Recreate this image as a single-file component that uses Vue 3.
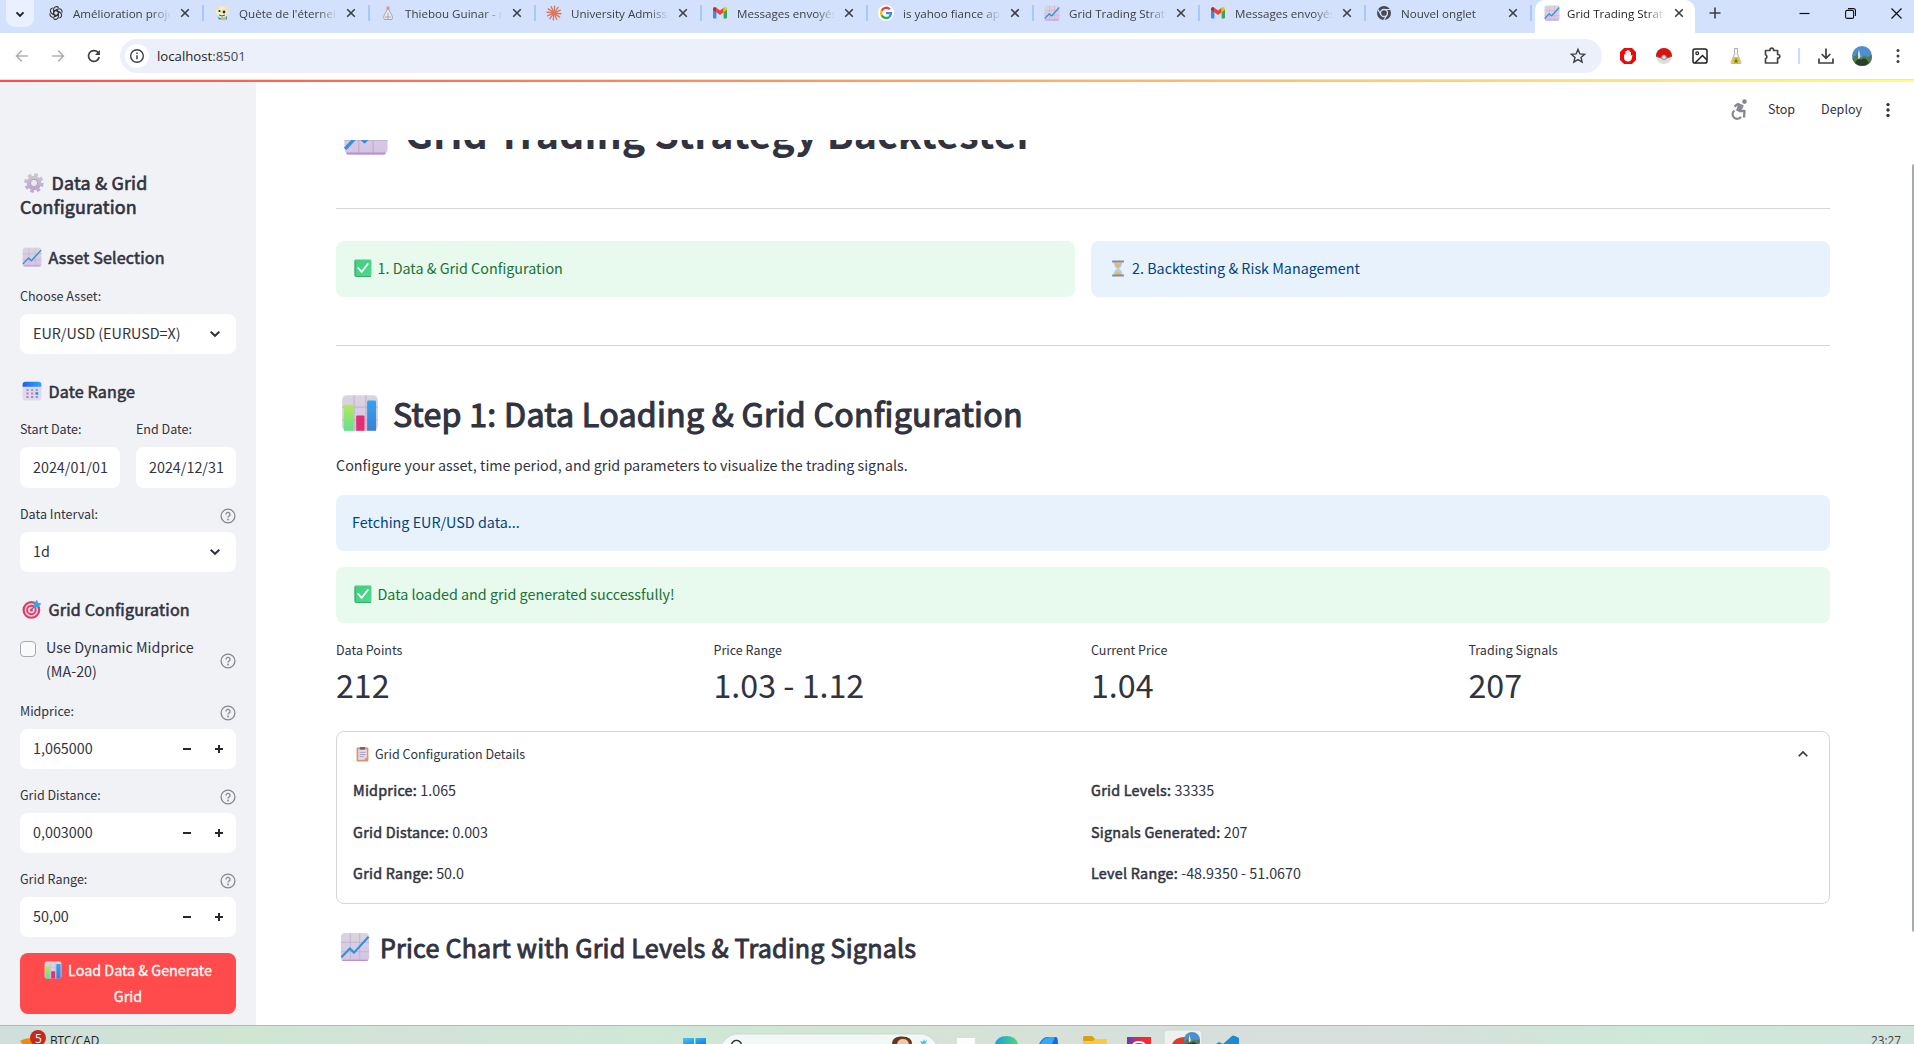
<script setup>
const tabs = [
  { icon: 'openai', title: 'Amélioration proje' },
  { icon: 'bee', title: "Quète de l'éternel" },
  { icon: 'guinar', title: 'Thiebou Guinar - r' },
  { icon: 'claude', title: 'University Admissi' },
  { icon: 'gmail', title: 'Messages envoyés' },
  { icon: 'google', title: 'is yahoo fiance ap' },
  { icon: 'chart', title: 'Grid Trading Strate' },
  { icon: 'gmail', title: 'Messages envoyés' },
  { icon: 'chrome', title: 'Nouvel onglet' },
  { icon: 'chart', title: 'Grid Trading Strate', active: true },
]
const extensions = ['hand', 'ball', 'picture', 'flask', 'puzzle']
const numbers = [
  { label: 'Midprice:', value: '1,065000' },
  { label: 'Grid Distance:', value: '0,003000' },
  { label: 'Grid Range:', value: '50,00' },
]
const metrics = [
  { label: 'Data Points', value: '212' },
  { label: 'Price Range', value: '1.03 - 1.12' },
  { label: 'Current Price', value: '1.04' },
  { label: 'Trading Signals', value: '207' },
]
const details = [
  [
    { k: 'Midprice:', v: '1.065' },
    { k: 'Grid Distance:', v: '0.003' },
    { k: 'Grid Range:', v: '50.0' },
  ],
  [
    { k: 'Grid Levels:', v: '33335' },
    { k: 'Signals Generated:', v: '207' },
    { k: 'Level Range:', v: '-48.9350 - 51.0670' },
  ],
]
</script>

<template>
  <div class="screen">
    <svg class="defs" width="0" height="0">
      <defs>
        <linearGradient id="gPaper" x1="0" y1="0" x2="0" y2="1"><stop offset="0" stop-color="#d9d5dd" /><stop offset="1" stop-color="#d6c3e6" /></linearGradient>
        <linearGradient id="gGreen" x1="0" y1="0" x2="0" y2="1"><stop offset="0" stop-color="#b5e85a" /><stop offset="1" stop-color="#5fe28c" /></linearGradient>
        <linearGradient id="gBlue" x1="0" y1="0" x2="0" y2="1"><stop offset="0" stop-color="#2fa4f5" /><stop offset="1" stop-color="#3f7fd0" /></linearGradient>
        <linearGradient id="gGear" x1="0" y1="0" x2="0" y2="1"><stop offset="0" stop-color="#c9c4cf" /><stop offset="1" stop-color="#bfa6d6" /></linearGradient>
        <linearGradient id="gCal" x1="0" y1="0" x2="1" y2="0"><stop offset="0" stop-color="#1f62e0" /><stop offset="1" stop-color="#33a4ff" /></linearGradient>
        <linearGradient id="gCheck" x1="0" y1="0" x2="1" y2="1"><stop offset="0" stop-color="#3fce7f" /><stop offset="1" stop-color="#4fd98d" /></linearGradient>
        <linearGradient id="gEdge" x1="0" y1="0" x2="1" y2="0"><stop offset="0" stop-color="#1b9de2" /><stop offset="1" stop-color="#4fd67c" /></linearGradient>
        <linearGradient id="gApp" x1="0" y1="0" x2="1" y2="0"><stop offset="0" stop-color="#5b3fc0" /><stop offset=".6" stop-color="#f0283c" /><stop offset="1" stop-color="#ff2a2a" /></linearGradient>
        <linearGradient id="gWin" x1="0" y1="0" x2="1" y2="1"><stop offset="0" stop-color="#4cc4f7" /><stop offset="1" stop-color="#0a84dc" /></linearGradient>
      </defs>
      <symbol id="chart" viewBox="0 0 32 32">
        <rect x="1" y="1" width="30" height="30" rx="4" fill="url(#gPaper)" />
        <path d="M11 1v30M21 1v30M1 11h30M1 21h30" stroke="#bdb0c7" stroke-width=".8" />
        <path d="M3 30.200h26" stroke="#b592cc" stroke-width="1.400" stroke-linecap="round" />
        <path d="M1.500 27 10.500 17.500 15 22 30.500 5" fill="none" stroke="#3490d8" stroke-width="2.300" stroke-linejoin="round" />
      </symbol>
      <symbol id="bars" viewBox="0 0 32 32">
        <rect x="1" y="1" width="30" height="30" rx="4" fill="url(#gPaper)" />
        <path d="M11 1v30M21 1v30M1 11h30M1 22h30" stroke="#bdb0c7" stroke-width=".8" />
        <path d="M2.500 31V10q0-1 1-1h6q1 0 1 1v21z" fill="url(#gGreen)" />
        <path d="M12.800 31V19q0-1 1-1h5q1 0 1 1v12z" fill="#e22f72" />
        <path d="M22 31V6.500q0-1 1-1h5.500q1 0 1 1V31z" fill="url(#gBlue)" />
      </symbol>
      <symbol id="gear" viewBox="0 0 32 32">
        <circle cx="16" cy="16" r="13" fill="none" stroke="url(#gGear)" stroke-width="5" stroke-dasharray="5.600 4.610" />
        <circle cx="16" cy="16" r="8.500" fill="none" stroke="url(#gGear)" stroke-width="6.500" />
        <circle cx="16" cy="16" r="5.800" fill="#eceaf1" stroke="#a193ae" stroke-width="1.200" />
      </symbol>
      <symbol id="calendar" viewBox="0 0 32 32">
        <rect x="1" y="1" width="30" height="30" rx="4.500" fill="#e3d6ef" />
        <path d="M1 9V5.500A4.500 4.500 0 0 1 5.500 1h21A4.500 4.500 0 0 1 31 5.500V9z" fill="url(#gCal)" />
        <g fill="#a08fb4"><path d="M7 13h3.500v3H7zM14.500 13H18v3h-3.500zM22 13h3.500v3H22zM7 18.500h3.500v3H7zM14.500 18.500H18v3h-3.500zM7 24h3.500v3H7zM14.500 24H18v3h-3.500zM22 24h3.500v3H22z" /></g>
        <rect x="21.500" y="18" width="4.500" height="4" fill="#1e8df0" />
      </symbol>
      <symbol id="target" viewBox="0 0 32 32">
        <circle cx="15" cy="17.500" r="12.500" fill="#e9d3e4" stroke="#e23a68" stroke-width="3.500" />
        <circle cx="15" cy="17.500" r="6.800" fill="#f0d5e4" stroke="#e23a68" stroke-width="3" />
        <circle cx="15" cy="17.500" r="2.400" fill="#e23a68" />
        <path d="m14.500 17.500 9-9" stroke="#5b6f9c" stroke-width="1.800" />
        <path d="M18.500 7.500 24 1l1.500 5L31 7l-5.500 6.500H19z" fill="#3ba3ea" />
      </symbol>
      <symbol id="check" viewBox="0 0 32 32">
        <rect x="1" y="1" width="30" height="30" rx="2.500" fill="url(#gCheck)" />
        <path d="M2 3v26q0 2 2 2h26" fill="none" stroke="#3aa76b" stroke-width="2" />
        <path d="m7.500 16 6 7L24.500 9" fill="none" stroke="#fff" stroke-width="3.200" stroke-linecap="round" stroke-linejoin="round" />
      </symbol>
      <symbol id="hourglass" viewBox="0 0 24 32">
        <path d="M4 4h16c0 6-2 9-6 12 4 3 6 6 6 12H4c0-6 2-9 6-12C6 13 4 10 4 4z" fill="#a9d2ee" />
        <path d="M6.500 7h11c-.5 4-2.500 6-5.500 8.500V22c3 1 5 3 5.500 6H6.500c0-3 2-5 5.500-6v-6.500C9 13 7 11 6.500 7z" fill="#f6b64e" />
        <path d="M1 1h22v3.500H1zM1 27.500h22V31H1z" fill="#8d8791" />
      </symbol>
      <symbol id="clipboard" viewBox="0 0 24 28">
        <rect x="1" y="1" width="22" height="26" rx="2" fill="#e0935c" />
        <path d="M4 4h16v16l-4 4H4z" fill="#e6dcf1" /><path d="M16 24v-4h4z" fill="#b7a4c8" />
        <rect x="7" y="0" width="10" height="5" rx="1.500" fill="#6f6878" />
        <path d="M6.500 10h11M6.500 14h11M6.500 18h8" stroke="#9c8fae" stroke-width="1.500" />
      </symbol>
      <symbol id="openai" viewBox="0 0 16 16">
        <g fill="none" stroke="#333" stroke-width="1.100" stroke-linejoin="round">
          <g v-for="a in 6" :key="a" :transform="'rotate(' + a * 60 + ' 8 8)'"><path d="M5.600 9.400V4.300a2.900 2.900 0 0 1 5.100-1.600M5.600 6.600 8 5.200l3.500 2" /></g>
        </g>
      </symbol>
      <symbol id="bee" viewBox="0 0 16 16">
        <ellipse cx="8" cy="6.500" rx="6.300" ry="5.200" fill="#f3ecc4" /><circle cx="3" cy="3" r="2" fill="#efe3ad" /><circle cx="13" cy="3" r="2" fill="#efe3ad" />
        <path d="M3.500 11.500q4 3.800 9.500-.5v3.500H5z" fill="#3a93b8" /><path d="M7 12h5v2.500H7z" fill="#e8be3f" />
        <circle cx="5.500" cy="6" r="1.100" fill="#333" /><circle cx="10" cy="7" r="1.400" fill="#333" /><path d="M5 10q3 2 6 0" stroke="#555" fill="none" />
      </symbol>
      <symbol id="guinar" viewBox="0 0 16 16">
        <circle cx="8" cy="3" r="1.800" fill="#d99a8f" /><path d="M7 4.500q-.5 2-2.500 5t0 5h7.500q1.500-2-.5-5T9 4.500z" fill="#e8e8ee" stroke="#9d9fb0" stroke-width=".9" /><path d="M8 8v6M5 12h6" stroke="#a9a9b8" />
      </symbol>
      <symbol id="claude" viewBox="0 0 16 16">
        <g stroke="#de7356" stroke-width="1.300" stroke-linecap="round"><path v-for="a in 6" :key="a" d="M8 1v14" :transform="'rotate(' + (a * 30 + 6) + ' 8 8)'" /></g>
      </symbol>
      <symbol id="gmail" viewBox="0 0 16 16">
        <path d="M1 13.500V4l3.400 2.500v7H2q-1 0-1-1z" fill="#4285f4" /><path d="M15 13.500V4l-3.400 2.500v7H14q1 0 1-1z" fill="#34a853" />
        <path d="M4.400 2.800 8 5.500l3.600-2.700v4.400L8 9.900 4.400 7.200z" fill="#ea4335" /><path d="M1 4q0-2 2-2l1.400.8v4.400L1 4.800z" fill="#c5221f" /><path d="M15 4q0-2-2-2l-1.400.8v4.400L15 4.800z" fill="#fbbc04" />
      </symbol>
      <symbol id="google" viewBox="0 0 16 16">
        <circle cx="8" cy="8" r="8" fill="#fff" />
        <g fill="none" stroke-width="2.300"><path d="M11.800 4.300A5 5 0 0 0 3.600 5.700" stroke="#ea4335" /><path d="M3.600 5.700a5 5 0 0 0 0 4.600" stroke="#fbbc05" /><path d="M3.600 10.300a5 5 0 0 0 7.700 1.500" stroke="#34a853" /><path d="M11.300 11.800A5 5 0 0 0 13 8.100H8" stroke="#4285f4" /></g>
      </symbol>
      <symbol id="chrome" viewBox="0 0 16 16">
        <circle cx="8" cy="8" r="7" fill="#474b50" /><circle cx="8" cy="8" r="3.500" fill="#474b50" stroke="#d3e1fd" stroke-width="1.300" />
        <path d="M8 4.500h6.500M4.900 9.700 1.800 4.300M11.100 9.700 7.900 15" stroke="#d3e1fd" stroke-width="1.200" />
      </symbol>
      <symbol id="hand" viewBox="0 0 20 20">
        <path d="M6 2h8l4 4v8l-4 4H6l-4-4V6z" fill="#e40d0d" />
        <path d="M6 8.500v3c0 2.500 1.500 4 4 4s3.600-1.500 4-4l.5-2.500-1.500.5V6h-1.400V4.500h-1.500V4H9v1H7.500v3.500z" fill="#fff" /><path d="M9 6v4M10.800 6v4M7.500 7v3M12.300 7v3" stroke="#f8a5a5" stroke-width=".4" />
      </symbol>
      <symbol id="ball" viewBox="0 0 20 20">
        <circle cx="10" cy="10" r="8" fill="#dcdddd" /><path d="M2 10a8 8 0 0 1 16 0q-8 4-16 0z" fill="#d8120f" /><path d="M2 10.300q8 3.700 16 0" stroke="#555" fill="none" stroke-width=".8" /><circle cx="10" cy="11.300" r="2.300" fill="#d5dada" stroke="#888" stroke-width=".9" />
      </symbol>
      <symbol id="picture" viewBox="0 0 20 20">
        <rect x="3" y="3" width="14" height="14" rx="1.800" fill="none" stroke="#222" stroke-width="1.500" /><circle cx="7.200" cy="7.200" r="1.400" fill="none" stroke="#222" stroke-width="1.200" /><path d="m5 17 7.500-7.500L17 14" fill="none" stroke="#222" stroke-width="1.500" />
      </symbol>
      <symbol id="flask" viewBox="0 0 20 20">
        <path d="M8 2.500h4M8.500 3v5L5 16.500q-.3 1 .8 1h8.400q1.100 0 .8-1L11.500 8V3" fill="#f4f6f2" stroke="#a9b7b9" stroke-width="1" /><path d="M7.800 11h4.400l2.300 5.800h-9z" fill="#f2bc1c" /><path d="m10 12 2 4.500H8z" fill="#3b8d3d" />
      </symbol>
      <symbol id="puzzle" viewBox="0 0 20 20">
        <path d="M3.500 4.500H8V4a1.800 1.800 0 0 1 3.600 0v.5h4v4h.4a1.800 1.800 0 0 1 0 3.600h-.4v4.900H3.500v-4.200a2.200 2.200 0 0 0 0-4.100z" fill="none" stroke="#454746" stroke-width="1.700" stroke-linejoin="round" />
      </symbol>
      <symbol id="help" viewBox="0 0 16 16">
        <circle cx="8" cy="8" r="6.900" fill="none" stroke="#85868e" stroke-width="1.300" /><path d="M6 6.500a2 2 0 1 1 2.900 1.700q-.9.500-.9 1.300" fill="none" stroke="#85868e" stroke-width="1.300" /><circle cx="8" cy="11.500" r=".9" fill="#85868e" />
      </symbol>
      <symbol id="avatar" viewBox="0 0 20 20">
        <circle cx="10" cy="10" r="10" fill="#4e8fd2" /><path d="M.5 13q1-4 3.500-3l1.500-5 2 3.500L9 12l3-2.500 3 1.500 4.500-2q1.500 6-3 9a10 10 0 0 1-16-5z" fill="#557a4b" /><path d="M7 3.500l1.500 7L6.500 14 5.800 8z" fill="#d7e2ea" /><path d="M3 17q3-6 6-3 4-4 8 3a10 10 0 0 1-14 0z" fill="#28402b" />
      </symbol>
    </svg>

    <div class="tabstrip">
      <div class="tabsearch"><svg width="10" height="10" viewBox="0 0 10 10"><path d="m1.500 3.300 3.500 3.500 3.500-3.500" fill="none" stroke="#1f1f1f" stroke-width="1.900" /></svg></div>
      <div v-for="(t, i) in tabs" :key="i" class="tab" :class="{ active: t.active }">
        <svg class="fav" width="16" height="16"><use :href="'#' + t.icon" /></svg>
        <span class="tabtitle">{{ t.title }}</span>
        <svg class="close" width="10" height="10" viewBox="0 0 10 10"><path d="m1.200 1.200 7.600 7.600m0-7.600L1.200 8.800" stroke="#3c3f43" stroke-width="1.600" /></svg>
      </div>
      <svg class="newtab" width="12" height="12" viewBox="0 0 12 12"><path d="M6 .500v11M.500 6h11" stroke="#3c3f43" stroke-width="1.600" /></svg>
      <div class="wincontrols">
        <svg width="11" height="11" viewBox="0 0 11 11"><path d="M.500 5.500h10" stroke="#111" stroke-width="1.200" /></svg>
        <svg width="11" height="11" viewBox="0 0 11 11"><rect x=".6" y="2.400" width="8" height="8" rx="1.500" fill="none" stroke="#111" stroke-width="1.100" /><path d="M3 .600h5.500q2 0 2 2V8" fill="none" stroke="#111" stroke-width="1.100" /></svg>
        <svg width="11" height="11" viewBox="0 0 11 11"><path d="m.500.500 10 10m0-10-10 10" stroke="#111" stroke-width="1.200" /></svg>
      </div>
    </div>

    <div class="toolbar">
      <div class="nav">
        <svg width="20" height="20" viewBox="0 0 20 20"><path d="M16 10H4.500M9.800 4.600 4.400 10l5.400 5.400" fill="none" stroke="#b0b1b3" stroke-width="1.500" /></svg>
        <svg width="20" height="20" viewBox="0 0 20 20"><path d="M4 10h11.500M10.200 4.600l5.400 5.400-5.400 5.400" fill="none" stroke="#b0b1b3" stroke-width="1.500" /></svg>
        <svg width="20" height="20" viewBox="0 0 20 20"><path d="M15.200 11a5.400 5.400 0 1 1-1.400-4.800l1.400 1.500" fill="none" stroke="#3c3f43" stroke-width="1.700" /><path d="M15.900 4v4.900H11z" fill="#3c3f43" /></svg>
      </div>
      <div class="omnibox">
        <span class="siteinfo"><svg width="16" height="16" viewBox="0 0 16 16"><circle cx="8" cy="8" r="6.300" fill="none" stroke="#3c3f43" stroke-width="1.400" /><path d="M8 7.200v4M8 4.400V6" stroke="#3c3f43" stroke-width="1.500" /></svg></span>
        <span class="url">localhost<i>:8501</i></span>
        <svg class="star" width="20" height="20" viewBox="0 0 20 20"><path d="m10 3.400 1.900 4.500 4.700.4-3.600 3.100 1.100 4.700-4.100-2.500-4.100 2.500L7 11.400 3.400 8.300l4.700-.4z" fill="none" stroke="#3c3f43" stroke-width="1.400" /></svg>
      </div>
      <div class="exts">
        <svg v-for="e in extensions" :key="e" width="20" height="20"><use :href="'#' + e" /></svg>
      </div>
      <span class="tsep"></span>
      <div class="exts after">
        <svg width="20" height="20" viewBox="0 0 20 20"><path d="M10 2.500v9.500M5.700 8 10 12.300 14.300 8M3 12.500V17h14v-4.500" fill="none" stroke="#3c3f43" stroke-width="1.700" /></svg>
        <svg width="20" height="20"><use href="#avatar" /></svg>
        <svg width="20" height="20" viewBox="0 0 20 20" fill="#3c3f43"><circle cx="10" cy="4.500" r="1.500" /><circle cx="10" cy="10" r="1.500" /><circle cx="10" cy="15.500" r="1.500" /></svg>
      </div>
    </div>

    <div class="page">
      <div class="decoration"></div>
      <aside class="sidebar">
        <h2><svg class="emoji gear" width="20" height="20"><use href="#gear" /></svg>Data &amp; Grid<br />Configuration</h2>

        <h3><svg width="20" height="20"><use href="#chart" /></svg>Asset Selection</h3>
        <div class="field first">
          <div class="label">Choose Asset:</div>
          <div class="input"><span>EUR/USD (EURUSD=X)</span><svg class="chev" width="12" height="12" viewBox="0 0 12 12"><path d="m1.700 3.700 4.300 4.100 4.300-4.100" fill="none" stroke="#31333f" stroke-width="2" /></svg></div>
        </div>

        <h3 class="sec"><svg width="20" height="20"><use href="#calendar" /></svg>Date Range</h3>
        <div class="dates">
          <div class="field"><div class="label">Start Date:</div><div class="input tall"><span>2024/01/01</span></div></div>
          <div class="field"><div class="label">End Date:</div><div class="input tall"><span>2024/12/31</span></div></div>
        </div>
        <div class="field">
          <div class="label">Data Interval:<svg class="help" width="16" height="16"><use href="#help" /></svg></div>
          <div class="input"><span>1d</span><svg class="chev" width="12" height="12" viewBox="0 0 12 12"><path d="m1.700 3.700 4.300 4.100 4.300-4.100" fill="none" stroke="#31333f" stroke-width="2" /></svg></div>
        </div>

        <h3 class="sec"><svg width="20" height="20"><use href="#target" /></svg>Grid Configuration</h3>
        <div class="checkrow">
          <span class="box"></span>
          <span class="checktext">Use Dynamic Midprice<br />(MA-20)</span>
          <svg class="help" width="16" height="16"><use href="#help" /></svg>
        </div>
        <div v-for="n in numbers" :key="n.label" class="field">
          <div class="label">{{ n.label }}<svg class="help" width="16" height="16"><use href="#help" /></svg></div>
          <div class="input"><span>{{ n.value }}</span>
            <div class="steps">
              <svg width="10" height="10" viewBox="0 0 10 10"><path d="M1 5h8" stroke="#262730" stroke-width="2" /></svg>
              <svg width="10" height="10" viewBox="0 0 10 10"><path d="M1 5h8M5 1v8" stroke="#262730" stroke-width="2" /></svg>
            </div>
          </div>
        </div>
        <div class="load">
          <span><svg width="18" height="18"><use href="#bars" /></svg>Load Data &amp; Generate</span>
          <span>Grid</span>
        </div>
      </aside>

      <main>
        <header>
          <svg class="runner" width="20" height="22" viewBox="0 0 20 22"><circle cx="15.500" cy="2.600" r="2.300" fill="#85868e" /><path d="M5.500 7.500 9 5l4.500 2-3 5h5l-.5 6.500" fill="none" stroke="#85868e" stroke-width="2.300" stroke-linejoin="round" /><path d="m9 6 3.500 1.500-3 5-2.500-1z" fill="#85868e" /><path d="M5.500 11.500a4.600 4.600 0 1 0 6.500 6.300" fill="none" stroke="#85868e" stroke-width="2.100" /></svg>
          <span class="stop">Stop</span>
          <span class="deploy">Deploy</span>
          <svg class="more" width="4" height="16" viewBox="0 0 4 16" fill="#31333f"><circle cx="2" cy="2.600" r="1.700" /><circle cx="2" cy="8" r="1.700" /><circle cx="2" cy="13.400" r="1.700" /></svg>
        </header>
        <div class="content">
          <h1><svg width="46" height="46"><use href="#chart" /></svg><span>Grid Trading Strategy Backtester</span></h1>
          <hr class="r1" />
          <div class="steps-row">
            <div class="alert ok"><svg width="18" height="18"><use href="#check" /></svg>1. Data &amp; Grid Configuration</div>
            <div class="alert note"><svg class="hg" width="14" height="17"><use href="#hourglass" /></svg>2. Backtesting &amp; Risk Management</div>
          </div>
          <hr class="r2" />
          <h2 class="step"><svg width="38" height="38"><use href="#bars" /></svg><span>Step 1: Data Loading &amp; Grid Configuration</span></h2>
          <p>Configure your asset, time period, and grid parameters to visualize the trading signals.</p>
          <div class="alert note wide">Fetching EUR/USD data...</div>
          <div class="alert ok wide"><svg width="18" height="18"><use href="#check" /></svg>Data loaded and grid generated successfully!</div>
          <div class="metrics">
            <div v-for="m in metrics" :key="m.label"><div class="mlabel">{{ m.label }}</div><div class="mvalue">{{ m.value }}</div></div>
          </div>
          <section class="expander">
            <div class="summary"><svg width="13" height="15"><use href="#clipboard" /></svg><span>Grid Configuration Details</span>
              <svg class="up" width="12" height="12" viewBox="0 0 12 12"><path d="m1.700 8.300 4.300-4.300 4.300 4.300" fill="none" stroke="#31333f" stroke-width="1.600" /></svg></div>
            <div class="cols">
              <div v-for="(c, i) in details" :key="i" class="col"><div v-for="d in c" :key="d.k"><b>{{ d.k }}</b> {{ d.v }}</div></div>
            </div>
          </section>
          <h3 class="price"><svg width="30" height="30"><use href="#chart" /></svg><span>Price Chart with Grid Levels &amp; Trading Signals</span></h3>
        </div>
        <div class="scrollbar"></div>
      </main>
    </div>

    <div class="taskbar">
      <div class="widget">
        <svg width="28" height="18" viewBox="0 0 28 18"><path d="M0 13q5-3 12-3v8H4z" fill="#f08a0c" /><circle cx="18" cy="10" r="8" fill="#c42b1c" /></svg>
        <span class="badge">5</span><span class="ticker">BTC/CAD</span>
      </div>
      <svg class="apps" width="580" height="18" viewBox="0 0 580 18">
        <path d="M3 12h11v6H3zM15.500 12H26v6H15.500z" fill="url(#gWin)" />
        <path d="M40 26a18 18 0 0 1 18-18h182a18 18 0 0 1 18 18z" fill="#f2f8f5" stroke="#c7d6cd" stroke-width=".8" />
        <path d="M52.500 22.500a5 5 0 1 1 8 0" fill="none" stroke="#2b2b2b" stroke-width="1.500" />
        <path d="M212 18q0-7 8-7.500 12-1 12 7.500z" fill="#63391f" /><path d="M217 18q1-5 6-5t6 5z" fill="#f3c8a3" />
        <path d="m240 15 3 1 1-3 1 3 2-3-1 4 2 0-6 1z" fill="#35bfe5" />
        <path d="M277 12h18v6h-18z" fill="#fcfcfd" />
        <path d="M315 18q2-8 11.500-8T338 18z" fill="url(#gEdge)" />
        <path d="M359 18q4-7 8-7h9q2 0 2 7z" fill="#0c6fdb" /><path d="M364 13q3-2 6-2h5l-3 7h-12z" fill="#35a9f3" />
        <path d="M403 18v-6q0-2 2-2h7l3 3h12v5z" fill="#f9cb45" /><path d="M403 15v-3q0-2 2-2h7l3 3-2 2z" fill="#dc9f10" />
        <path d="M447 11h24v7h-24z" fill="url(#gApp)" /><path d="M453 19q1-3 6-3t6 3" fill="none" stroke="#fff" stroke-width="1.800" />
        <rect x="484" y="4" width="38" height="22" rx="4" fill="#edf2ef" stroke="#c9d4ce" stroke-width=".8" />
        <path d="M492 18q3-7 13-7v7z" fill="#e03a2d" />
        <svg x="504" y="6" width="16" height="16"><use href="#avatar" /></svg>
        <path d="m536 18 3-2 4 2zM543 18l9-8q2-1 3 0l4 2v6z" fill="#1c8bd4" />
      </svg>
      <span class="clock">23:27</span>
    </div>
  </div>
</template>

<style>
body { overflow: hidden; }
</style>

<style scoped>
* { box-sizing: border-box; }
svg { display: block; flex: none; }
h1, h2, h3, p { margin: 0; }
.defs { position: absolute; }
.screen { width: 1914px; height: 1044px; overflow: hidden; display: flex; flex-direction: column; background: #fff; color: #31333f; font-family: "Noto Sans CJK SC", "Noto Sans", sans-serif; font-size: 14.330px; }

/* browser chrome */
.tabstrip { height: 33px; flex: none; background: #d3e1fd; display: flex; font: 11.600px "Open Sans", "Noto Sans", sans-serif; color: #3c3f43; }
.tabsearch { width: 28px; height: 27px; margin: 0 4px 0 6px; background: #e9f0fe; border-radius: 0 0 9px 9px; display: flex; align-items: center; justify-content: center; }
.tab { width: 166px; height: 26px; display: flex; align-items: center; padding-left: 10px; position: relative; }
.tab::after { content: ""; position: absolute; right: 0; top: 5px; width: 2px; height: 16px; background: #a8c7fa; }
.tab.active::after { display: none; }
.tabtitle { width: 98px; margin-left: 9px; white-space: nowrap; line-height: 20px; padding-top: 1px; -webkit-mask-image: linear-gradient(90deg, #000 80%, transparent); mask-image: linear-gradient(90deg, #000 80%, transparent); }
.close { margin-left: 9px; }
.tab.active { width: 160px; margin-left: 3px; margin-right: 2px; padding: 0 0 7px 9px; height: 33px; background: #fff; border-radius: 10px 10px 0 0; color: #1f1f1f; }
.tab.active .tabtitle { margin-left: 7px; }
.newtab { margin: 7px 0 0 12px; }
.wincontrols { margin: 8px 12px 0 auto; display: flex; gap: 35px; }
.toolbar { height: 47px; flex: none; display: flex; align-items: center; background: #fff; border-bottom: 1px solid #dfe1e5; padding-left: 12px; }
.nav { display: flex; gap: 16px; }
.omnibox { width: 1482px; height: 34px; border-radius: 17px; margin-left: 16px; background: #ebf0fa; display: flex; align-items: center; padding: 0 14px 0 5px; }
.siteinfo { width: 24px; height: 24px; border-radius: 12px; background: #fff; display: flex; align-items: center; justify-content: center; }
.url { margin-left: 8px; font: 13.200px/20px "Open Sans", "Noto Sans", sans-serif; color: #1f1f1f; }
.url i { font-style: normal; color: #474b50; }
.star { margin-left: auto; }
.exts { display: flex; gap: 16px; margin-left: 16px; }
.tsep { width: 2px; height: 16px; background: #c9dcfb; margin-left: 16px; }
.exts.after { margin-left: 16px; }

/* app */
.page { height: 945px; flex: none; display: flex; position: relative; }
.decoration { position: absolute; left: 0; top: 0; width: 100%; height: 2px; background: linear-gradient(90deg, #ff4b4b, #fffd80); z-index: 2; }
.sidebar { width: 256px; flex: none; background: #f0f2f6; padding: 90px 20px 0; display: flex; flex-direction: column; }
/* semi-bold: regular outlines thickened slightly */
.sidebar h2, .sidebar h3, .step, .price, .col b { font-weight: 400; -webkit-text-stroke: 0.036em currentColor; letter-spacing: 0.010em; }
.sidebar h2 { font-size: 17.900px; line-height: 24px; }
.sidebar h2 .emoji { display: inline-block; vertical-align: -3px; margin: 0 8px 0 3.500px; }
.sidebar h3 { font-size: 16.100px; line-height: 22px; display: flex; align-items: center; margin-top: 28px; padding-left: 2px; white-space: nowrap; }
.sidebar h3 svg { margin-right: 6.500px; }
.sidebar h3.sec { margin-top: 26px; margin-bottom: 1px; }
.field { margin-top: 16px; }
.field.first { margin-top: 18px; }
.label { height: 28px; font-size: 12.530px; line-height: 19px; display: flex; justify-content: space-between; }
.label .help { margin-top: 4px; }
.input { height: 40px; border-radius: 8px; background: #fff; padding: 0 16px 0 13px; display: flex; align-items: center; justify-content: space-between; line-height: 24px; white-space: nowrap; }
.input > span { margin-bottom: 2px; }
.input .chev { margin-right: -1px; }
.input.tall { height: 41px; }
.steps { display: flex; gap: 22px; margin-right: -4px; }
.dates { display: flex; gap: 16px; }
.dates .field { width: 100px; }
.checkrow { margin-top: 15px; height: 48px; display: flex; }
.box { width: 16px; height: 16px; margin: 5px 10px 0 0; border: 1px solid #a9aab1; border-radius: 4px; background: #f8f9fb; flex: none; }
.checktext { line-height: 24px; margin-top: -1px; }
.checkrow .help { margin: 17px 0 0 auto; }
.checkrow + .field { margin-top: 17px; }
.load { margin-top: 16px; height: 61px; background: #ff4b4b; border-radius: 8px; color: #fff; display: flex; flex-direction: column; align-items: center; padding-top: 4px; line-height: 26px; -webkit-text-stroke: 0.020em currentColor; }
.load span { display: flex; align-items: center; white-space: nowrap; }
.load svg { margin-right: 6px; }

main { flex: 1; display: flex; flex-direction: column; overflow: hidden; position: relative; }
header { height: 60px; flex: none; display: flex; align-items: center; justify-content: flex-end; font-size: 12.530px; line-height: 20px; padding-right: 24px; }
header span { margin-bottom: 2px; }
.stop { margin-left: 19px; }
.deploy { margin-left: 26px; }
.more { margin-left: 24px; }
.content { flex: 1; width: 1494px; margin-left: 80px; overflow: hidden; }
h1 { margin-top: -35px; height: 53px; line-height: 53px; font-size: 39.400px; font-weight: 700; letter-spacing: 0.050px; display: flex; align-items: center; padding-left: 7px; white-space: nowrap; }
h1 span { margin-left: 16px; }
h1 svg { margin-top: 2px; }
hr { border: 0; height: 1px; background: #d6d6d9; margin: 0; }
.r1 { margin-top: 50px; }
.r2 { margin-top: 48px; }
.steps-row { display: flex; gap: 16px; margin-top: 32px; }
.steps-row .alert { flex: 1; }
.alert { height: 56px; border-radius: 8px; padding: 0 16px 2px 18px; display: flex; align-items: center; line-height: 24px; }
.alert svg { margin-right: 5.500px; }
.alert .hg { margin: 0 7px 0 2px; }
.ok { background: #e8f9ee; color: #177233; }
.note { background: #e8f2fc; color: #004280; }
.wide { margin-top: 16px; }
.note.wide { padding-left: 16px; margin-top: 18px; }
.step { margin-top: 45px; height: 44px; line-height: 44px; font-size: 32.200px; letter-spacing: 0.008em; display: flex; align-items: center; padding-left: 5px; white-space: nowrap; }
.step span { margin-left: 14px; }
p { margin-top: 18px; line-height: 24px; }
.metrics { display: flex; margin-top: 17px; gap: 16px; }
.metrics > div { flex: 1; }
.mlabel { font-size: 12.530px; line-height: 19px; }
.mvalue { font-size: 32.200px; line-height: 44px; margin-top: 3px; }
.expander { margin-top: 25px; height: 173px; border: 1px solid #d6d6d9; border-radius: 8px; padding: 0 16px; }
.summary { height: 44px; display: flex; align-items: center; font-size: 12.530px; padding-left: 3px; }
.summary span { margin: 0 0 2px 6px; }
.up { margin-left: auto; margin-right: 4px; }
.cols { display: flex; gap: 16px; padding-top: 2px; }
.col { flex: 1; display: flex; flex-direction: column; gap: 17.600px; line-height: 24px; }
.col b { letter-spacing: 0.018em; }
.price { margin-top: 26px; height: 34px; line-height: 34px; font-size: 25.100px; letter-spacing: 0.008em; display: flex; align-items: center; padding-left: 4px; white-space: nowrap; }
.price span { margin-left: 10px; }
.scrollbar { position: absolute; right: 0; top: 84px; width: 2px; height: 768px; background: #a8a9b2; border-radius: 2px 0 0 2px; }

/* taskbar */
.taskbar { height: 19px; flex: none; overflow: hidden; border-top: 1px solid #adbcb4; background: linear-gradient(90deg, #cfdfdc 0, #cfe6d2 13%, #d2e3da 22%, #cfe8d5 35%, #d5e3d5 48%, #d7dfdc 62%, #d6e0dc 74%, #cde8d8 86%, #d1e4dc 100%); display: flex; font: 11.800px/16px "Open Sans", "Noto Sans", sans-serif; color: #1b1b1b; }
.widget { width: 680px; display: flex; padding-left: 20px; position: relative; }
.widget svg { margin-top: 2px; }
.badge { position: absolute; left: 35px; top: 4px; color: #fff; }
.ticker { margin: 6px 0 0 2px; }
.clock { margin: 6px 13px 0 auto; color: #444; }
</style>
